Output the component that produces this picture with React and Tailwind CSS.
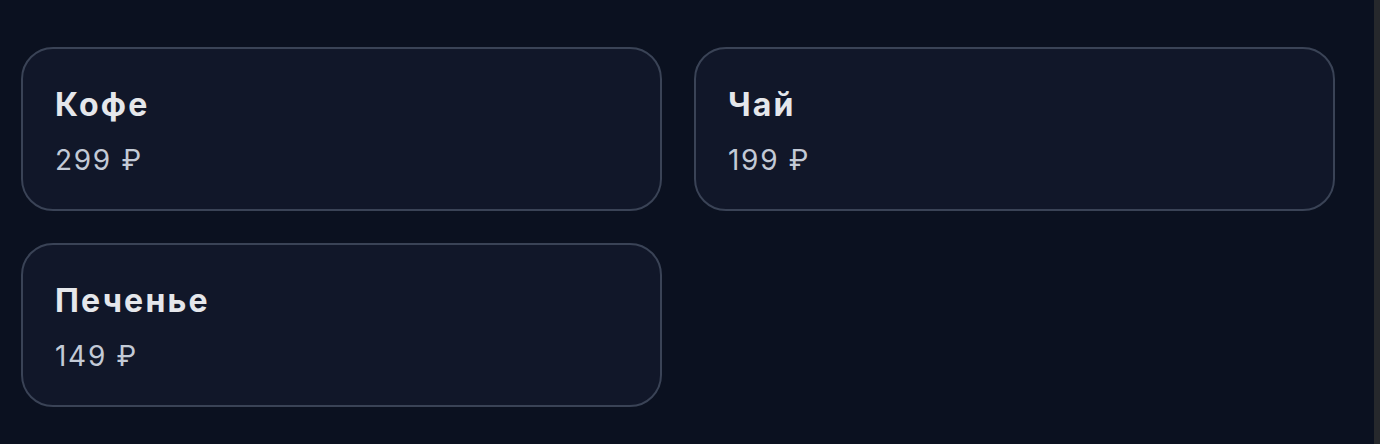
import React from 'react';

const items = [
  { name: 'Кофе', price: '299 ₽' },
  { name: 'Чай', price: '199 ₽' },
  { name: 'Печенье', price: '149 ₽' },
];

const ProductCard = ({ name, price }) => (
  <div className="rounded-[32px] border-2 border-[#3a4356] bg-[#111729] px-8 pt-8 pb-[29px]">
    <div className="text-[32px] leading-[48px] font-bold tracking-[2.2px] text-[#e5e7eb]">{name}</div>
    <div className="mt-[11px] text-[28px] leading-[40px] tracking-[1.7px] text-[#c3cad6]">{price}</div>
  </div>
);

export default function App() {
  return (
    <div
      className="flex h-[444px] w-full bg-[#0b1120]"
      style={{ fontFamily: 'Inter, "Noto Sans", sans-serif' }}
    >
      <div className="flex-1 pl-[21px] pt-[47px]">
        <div className="grid grid-cols-[641px_641px] gap-x-[32px] gap-y-[32px]">
          {items.map((item) => (
            <ProductCard key={item.name} {...item} />
          ))}
        </div>
      </div>
      <div className="w-[6px] bg-[#26282c]" />
    </div>
  );
}
